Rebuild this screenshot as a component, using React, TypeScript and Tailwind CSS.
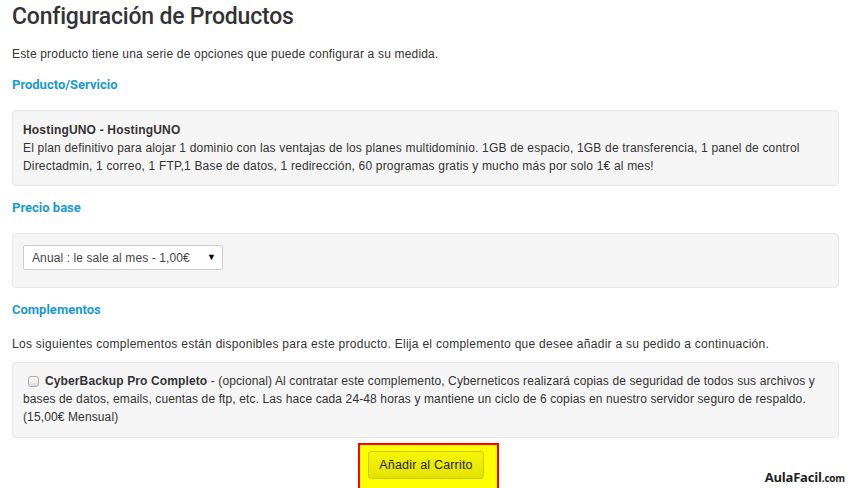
const body = "font-['Liberation_Sans',Arial,sans-serif] text-[12px] tracking-[0.18px] text-[#333]";
const heading = "font-['Roboto',sans-serif] text-[13px] font-bold tracking-[0px] text-[#1a99d4]";

function Panel({ children, className = "" }: { children: React.ReactNode; className?: string }) {
  return (
    <div className={`rounded-[4px] border border-[#e6e6e6] bg-[#f5f5f5] ${className}`}>
      {children}
    </div>
  );
}

export default function App() {
  return (
    <div className={`relative h-[488px] w-[851px] overflow-hidden bg-white px-[12px] ${body}`}>
      <h1 className="pt-[2px] font-['Roboto',sans-serif] text-[23px] font-medium leading-[30px] tracking-[-0.2px] text-[#333]">
        Configuración de Productos
      </h1>

      <p className="mt-[14px] leading-[16px]">
        Este producto tiene una serie de opciones que puede configurar a su medida.
      </p>

      <h2 className={`mt-[14px] leading-[18px] ${heading}`}>Producto/Servicio</h2>

      <Panel className="mt-[16px] h-[76px] w-[827px] px-[10px] pt-[10px]">
        <p className="font-bold leading-[18px]">HostingUNO - HostingUNO</p>
        <p className="leading-[18px]">
          El plan definitivo para alojar 1 dominio con las ventajas de los planes multidominio. 1GB de
          espacio, 1GB de transferencia, 1 panel de control Directadmin, 1 correo, 1 FTP,1 Base de datos,
          1 redirección, 60 programas gratis y mucho más por solo 1€ al mes!
        </p>
      </Panel>

      <h2 className={`mt-[13px] leading-[18px] ${heading}`}>Precio base</h2>

      <Panel className="mt-[16px] h-[55px] w-[827px] px-[10px] pt-[11px]">
        <div className="flex h-[25px] w-[200px] items-center justify-between rounded-[2px] border border-[#ccc] bg-white pl-[8px] pr-[6px] text-[12px] tracking-[0.1px] text-[#444]">
          <span>Anual : le sale al mes - 1,00€</span>
          <span className="text-[9px] text-black">▼</span>
        </div>
      </Panel>

      <h2 className={`mt-[13px] leading-[18px] ${heading}`}>Complementos</h2>

      <p className="mt-[17px] leading-[16px] tracking-[0.28px]">
        Los siguientes complementos están disponibles para este producto. Elija el complemento que desee
        añadir a su pedido a continuación.
      </p>

      <Panel className="mt-[10px] h-[76px] w-[827px] px-[10px] pt-[9px]">
        <div className="flex items-start">
          <span className="mt-[4px] mr-[6px] ml-[5px] h-[11px] w-[11px] shrink-0 rounded-[3px] border border-[#aaa] bg-gradient-to-b from-[#fdfdfd] to-[#dcdcdc]" />
          <p className="-ml-[22px] indent-[22px] leading-[18px] tracking-[0.12px]">
            <b>CyberBackup Pro Completo</b> - (opcional) Al contratar este complemento, Cyberneticos
            realizará copias de seguridad de todos sus archivos y bases de datos, emails, cuentas de ftp,
            etc. Las hace cada 24-48 horas y mantiene un ciclo de 6 copias en nuestro servidor seguro de
            respaldo. (15,00€ Mensual)
          </p>
        </div>
      </Panel>

      <div className="mt-[5px] flex justify-center pl-[6px]">
        <div className="border-2 border-[#ff0000] bg-[#ffff00] pt-[6px] pr-[13px] pb-[10px] pl-[8px]">
          <button className="h-[28px] w-[116px] rounded-[3px] border border-[#c8c800] bg-gradient-to-b from-[#f6f600] to-[#e2e200] text-[12.5px] text-[#222]">
            Añadir al Carrito
          </button>
        </div>
      </div>

      <div className="absolute right-[6px] bottom-[1px] font-['Open_Sans',sans-serif] text-[13px] font-bold tracking-[-0.2px] text-[#222]">
        AulaFacil<span className="text-[10px]">.com</span>
      </div>
    </div>
  );
}
